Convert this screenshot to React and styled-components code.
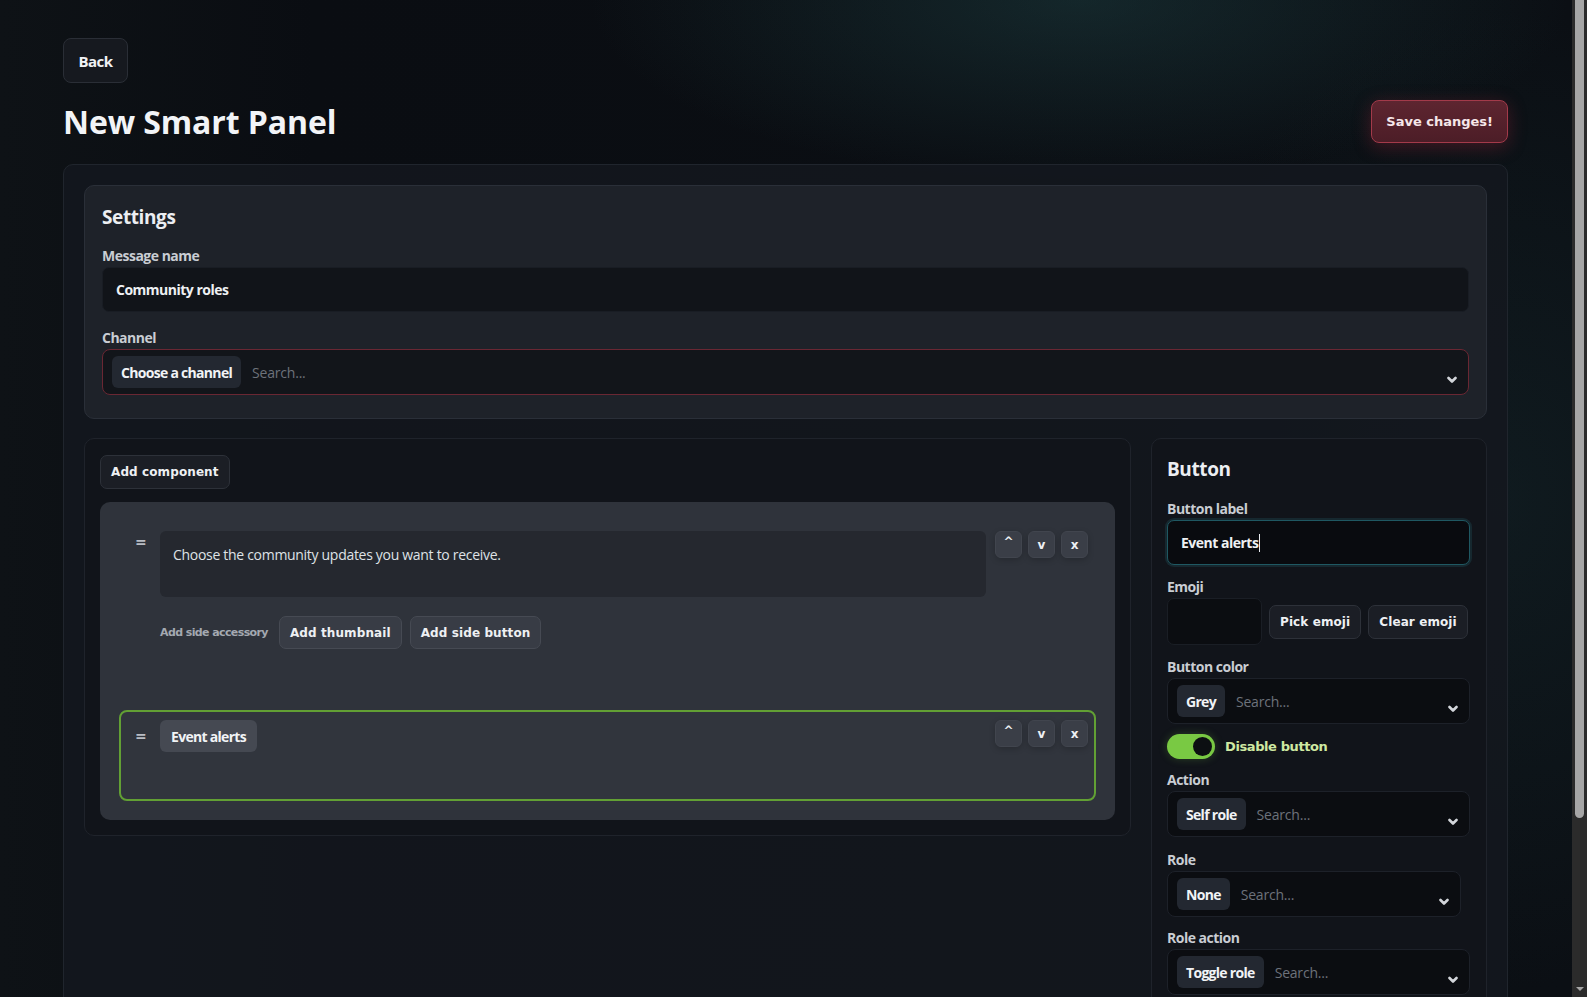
import React from "react";
import styled, { createGlobalStyle } from "styled-components";

const GlobalStyle = createGlobalStyle`
  html, body {
    margin: 0;
    padding: 0;
    overflow: hidden;
  }

  body {
    background-color: #0b0e13;
    color: #e6e8ec;
    font-family: "Open Sans", "Noto Sans", sans-serif;
  }
`;

const Frame = styled.div`
  display: grid;
  grid-template-columns: 1fr 15px;
  height: 100vh;
`;

const Main = styled.main`
  overflow: hidden;
  background-color: #0b0e13;
  background-image:
    radial-gradient(ellipse 700px 260px at 1080px 0px, rgba(38, 84, 86, 0.35), transparent 70%),
    radial-gradient(ellipse 500px 700px at 1500px 500px, rgba(24, 48, 52, 0.35), transparent 70%),
    linear-gradient(90deg, #0e1216 0%, #0a0d12 20%, #0b0f14 100%);
`;

const ScrollRail = styled.div`
  background: #2b2b2b;
  display: flex;
  flex-direction: column;
  align-items: center;
  justify-content: space-between;
`;

const ScrollThumb = styled.div`
  width: 9px;
  height: 818px;
  background: #a6a6a6;
  border-radius: 0 0 5px 5px;
`;

const ScrollArrow = styled.div`
  width: 0;
  height: 0;
  border-left: 4px solid transparent;
  border-right: 4px solid transparent;
  border-top: 4px solid #a6a6a6;
  margin-bottom: 6px;
`;

const Page = styled.div`
  padding: 38px 64px 200px 63px;
`;

const PlainButton = styled.button`
  height: ${(p) => p.$h || 34}px;
  padding: 0 ${(p) => p.$px || 10}px;
  border-radius: 7px;
  border: 1px solid ${(p) => p.$border || "#2d3139"};
  background: ${(p) => p.$bg || "#1b1e25"};
  color: #eef0f3;
  font-family: "DejaVu Sans", sans-serif;
  font-weight: 700;
  font-size: 12px;
  letter-spacing: 0.1px;
  cursor: pointer;
  white-space: nowrap;
`;

const BackButton = styled.button`
  height: 45px;
  width: 65px;
  border-radius: 8px;
  border: 1px solid #2a2e36;
  background: #16191f;
  color: #f0f2f5;
  font-family: "Open Sans", sans-serif;
  font-weight: 700;
  font-size: 15px;
  letter-spacing: -0.6px;
`;

const TitleRow = styled.div`
  display: flex;
  justify-content: space-between;
  align-items: center;
  margin-top: 17px;
`;

const Title = styled.h1`
  margin: 0;
  font-size: 32px;
  line-height: 40px;
  font-weight: 700;
  letter-spacing: -0.1px;
  color: #f2f4f7;
`;

const SaveButton = styled.button`
  height: 43px;
  padding: 0 14px;
  border-radius: 8px;
  border: 1.5px solid #a33a4a;
  background: linear-gradient(180deg, #5e2530, #4c1d27);
  color: #f6e6e9;
  font-family: "DejaVu Sans", sans-serif;
  font-weight: 700;
  font-size: 13px;
  box-shadow: 0 4px 18px rgba(170, 40, 60, 0.35);
`;

const Shell = styled.div`
  margin-top: 21px;
  border: 1px solid #20252d;
  border-radius: 10px;
  background: rgba(20, 24, 31, 0.85);
  padding: 20px;
`;

const Card = styled.section`
  border: 1px solid ${(p) => (p.$dark ? "#1f232b" : "#2a2f38")};
  border-radius: 10px;
  background: ${(p) => (p.$dark ? "#11141a" : "#1e2229")};
  padding: ${(p) => p.$pad || "18px 17px 23px"};
`;

const Heading = styled.h2`
  margin: 0 0 ${(p) => p.$mb || 17}px;
  font-size: 19px;
  line-height: 26px;
  font-weight: 700;
  letter-spacing: -0.4px;
  color: #eceef2;
`;

const Field = styled.div`
  margin-top: ${(p) => p.$mt ?? 17}px;
`;

const Label = styled.div`
  font-size: 14px;
  line-height: 18px;
  font-weight: 700;
  letter-spacing: -0.5px;
  color: #c9cdd3;
  margin-bottom: 2px;
`;

const TextBox = styled.div`
  height: ${(p) => p.$h || 45}px;
  box-sizing: border-box;
  display: flex;
  align-items: center;
  padding: 0 13px;
  border-radius: 7px;
  border: 1px solid ${(p) => (p.$focus ? "#1f5862" : "#191d24")};
  background: ${(p) => (p.$focus ? "#090b0f" : "#111419")};
  box-shadow: ${(p) => (p.$focus ? "0 0 0 2px rgba(35, 95, 105, 0.28)" : "none")};
  font-size: 14px;
  font-weight: 700;
  letter-spacing: -0.5px;
  color: #eef0f3;
`;

const Caret = styled.span`
  display: inline-block;
  width: 1px;
  height: 18px;
  background: #e8eaee;
  margin-left: 1px;
`;

const SelectBox = styled.div`
  height: 46px;
  box-sizing: border-box;
  display: flex;
  align-items: center;
  gap: 11px;
  padding: 0 9px;
  border-radius: 8px;
  border: 1px solid ${(p) => (p.$error ? "#6a2733" : "#1d2129")};
  background: ${(p) => (p.$error ? "#12151a" : "#0b0d11")};
  width: ${(p) => p.$w || "auto"};
`;

const Chip = styled.span`
  height: 32px;
  display: inline-flex;
  align-items: center;
  padding: 0 ${(p) => p.$px || 9}px;
  border-radius: 6px;
  background: ${(p) => p.$bg || "#232831"};
  font-size: 14px;
  font-weight: 700;
  letter-spacing: -0.7px;
  color: #f1f3f6;
  white-space: nowrap;
`;

const Placeholder = styled.span`
  flex: 1;
  font-size: 14px;
  color: #6d727b;
  letter-spacing: -0.2px;
`;

const Chevron = styled.svg`
  align-self: flex-end;
  margin-bottom: 10px;
  margin-right: 2px;
`;

const Lower = styled.div`
  display: grid;
  grid-template-columns: 1fr 336px;
  gap: 20px;
  margin-top: 19px;
  align-items: start;
`;

const List = styled.div`
  margin-top: 13px;
  padding: 19px;
  border-radius: 10px;
  background: #2f333b;
  display: flex;
  flex-direction: column;
  gap: 19px;
`;

const Item = styled.div`
  display: flex;
  align-items: flex-start;
  border: 2px solid ${(p) => (p.$selected ? "#62a034" : "transparent")};
  border-radius: 8px;
  padding: 8px 6px ${(p) => (p.$selected ? 8 : 40)}px 14px;
  min-height: ${(p) => (p.$selected ? 71 : 0)}px;
  background: ${(p) => (p.$selected ? "#31353d" : "transparent")};
`;

const Handle = styled.span`
  width: 10px;
  margin-top: ${(p) => p.$mt || 4}px;
  margin-right: 15px;
  font-family: "DejaVu Sans", sans-serif;
  font-size: 14px;
  font-weight: 700;
  color: #b9bdc4;
  line-height: 14px;
  text-align: center;
`;

const ItemBody = styled.div`
  flex: 1;
  margin-right: 9px;
`;

const TextDisplay = styled.div`
  height: 66px;
  box-sizing: border-box;
  border-radius: 6px;
  background: #25282f;
  padding: 14px 13px;
  font-size: 14px;
  letter-spacing: -0.3px;
  color: #dfe2e6;
`;

const AccessoryRow = styled.div`
  display: flex;
  align-items: center;
  gap: 8px;
  margin-top: 19px;
`;

const AccessoryLabel = styled.span`
  font-family: "DejaVu Sans", sans-serif;
  font-size: 11px;
  font-weight: 700;
  letter-spacing: -0.6px;
  color: #a4a9b1;
  margin-right: 3px;
`;

const Controls = styled.div`
  display: flex;
  gap: 6px;
`;

const CtrlButton = styled.button`
  width: 27px;
  height: 27px;
  padding: 0;
  border-radius: 6px;
  border: 1px solid #41454e;
  background: #3a3e47;
  color: #eef0f3;
  font-family: "DejaVu Sans", sans-serif;
  font-weight: 700;
  font-size: 12px;
  line-height: 1;
  display: flex;
  align-items: ${(p) => (p.$top ? "flex-start" : "center")};
  padding-top: ${(p) => (p.$top ? 4 : 0)}px;
  justify-content: center;
  box-shadow: 0 2px 6px rgba(0, 0, 0, 0.2);
`;

const EmojiRow = styled.div`
  display: flex;
  align-items: center;
  gap: 7px;
`;

const EmojiBox = styled.div`
  width: 93px;
  height: 45px;
  border-radius: 7px;
  border: 1px solid #1a1e25;
  background: #0b0d11;
`;

const ToggleRow = styled.div`
  display: flex;
  align-items: center;
  gap: 10px;
  margin-top: 10px;
`;

const Toggle = styled.span`
  width: 48px;
  height: 25px;
  box-sizing: border-box;
  border-radius: 13px;
  background: #79c943;
  display: flex;
  align-items: center;
  justify-content: flex-end;
  padding: 3px;
  box-shadow: 0 0 8px rgba(120, 200, 70, 0.25);
`;

const Knob = styled.span`
  width: 19px;
  height: 19px;
  border-radius: 50%;
  background: #0c0f12;
`;

const ToggleLabel = styled.span`
  font-family: "DejaVu Sans", sans-serif;
  font-size: 13px;
  font-weight: 700;
  letter-spacing: -0.4px;
  color: #cfe9a2;
`;

const ChevronDown = () => (
  <Chevron width="10" height="8" viewBox="0 0 10 8">
    <path d="M1.5 2 L5 5.5 L8.5 2" fill="none" stroke="#d3d6db" strokeWidth="2.6" strokeLinecap="round" strokeLinejoin="round" />
  </Chevron>
);

const Select = ({ chip, error, width }) => (
  <SelectBox $error={error} $w={width}>
    <Chip>{chip}</Chip>
    <Placeholder>Search...</Placeholder>
    <ChevronDown />
  </SelectBox>
);

const ItemControls = () => (
  <Controls>
    <CtrlButton $top>^</CtrlButton>
    <CtrlButton>v</CtrlButton>
    <CtrlButton>x</CtrlButton>
  </Controls>
);

const App = () => {
  return (
    <>
      <GlobalStyle />
      <Frame>
        <Main>
          <Page>
            <BackButton>Back</BackButton>
            <TitleRow>
              <Title>New Smart Panel</Title>
              <SaveButton>Save changes!</SaveButton>
            </TitleRow>

            <Shell>
              <Card>
                <Heading>Settings</Heading>
                <Label>Message name</Label>
                <TextBox>Community roles</TextBox>
                <Field>
                  <Label>Channel</Label>
                  <Select chip="Choose a channel" error />
                </Field>
              </Card>

              <Lower>
                <Card $dark $pad="16px 15px 15px">
                  <PlainButton>Add component</PlainButton>
                  <List>
                    <Item>
                      <Handle>=</Handle>
                      <ItemBody>
                        <TextDisplay>Choose the community updates you want to receive.</TextDisplay>
                        <AccessoryRow>
                          <AccessoryLabel>Add side accessory</AccessoryLabel>
                          <PlainButton $h={33} $bg="#383c45" $border="#464a53">Add thumbnail</PlainButton>
                          <PlainButton $h={33} $bg="#383c45" $border="#464a53">Add side button</PlainButton>
                        </AccessoryRow>
                      </ItemBody>
                      <ItemControls />
                    </Item>
                    <Item $selected>
                      <Handle $mt={9}>=</Handle>
                      <ItemBody>
                        <Chip $bg="#454952" $px={11}>Event alerts</Chip>
                      </ItemBody>
                      <ItemControls />
                    </Item>
                  </List>
                </Card>

                <Card $dark $pad="17px 16px 24px 15px">
                  <Heading $mb={18}>Button</Heading>
                  <Label>Button label</Label>
                  <TextBox $focus>
                    Event alerts
                    <Caret />
                  </TextBox>
                  <Field $mt={13}>
                    <Label>Emoji</Label>
                    <EmojiRow>
                      <EmojiBox />
                      <PlainButton>Pick emoji</PlainButton>
                      <PlainButton>Clear emoji</PlainButton>
                    </EmojiRow>
                  </Field>
                  <Field $mt={13}>
                    <Label>Button color</Label>
                    <Select chip="Grey" />
                  </Field>
                  <ToggleRow>
                    <Toggle>
                      <Knob />
                    </Toggle>
                    <ToggleLabel>Disable button</ToggleLabel>
                  </ToggleRow>
                  <Field $mt={12}>
                    <Label>Action</Label>
                    <Select chip="Self role" />
                  </Field>
                  <Field $mt={14}>
                    <Label>Role</Label>
                    <Select chip="None" width="294px" />
                  </Field>
                  <Field $mt={12}>
                    <Label>Role action</Label>
                    <Select chip="Toggle role" />
                  </Field>
                </Card>
              </Lower>
            </Shell>
          </Page>
        </Main>
        <ScrollRail>
          <ScrollThumb />
          <ScrollArrow />
        </ScrollRail>
      </Frame>
    </>
  );
};

export default App;
